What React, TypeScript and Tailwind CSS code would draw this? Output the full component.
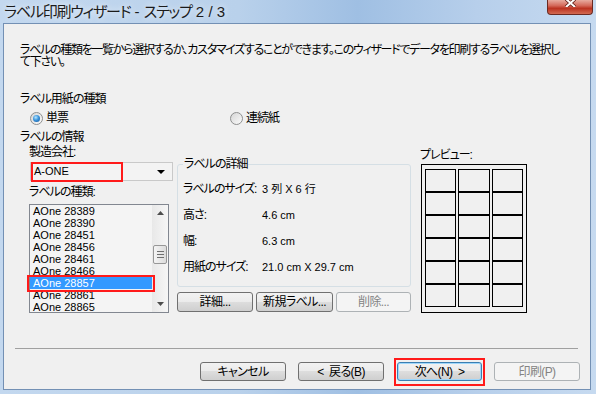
import type { ReactNode } from "react";

const font = "[font-family:'Liberation_Sans','Noto_Sans_CJK_JP',sans-serif] [font-feature-settings:'palt']";

const labelItems = [
  "AOne 28389",
  "AOne 28390",
  "AOne 28451",
  "AOne 28456",
  "AOne 28461",
  "AOne 28466",
  "AOne 28857",
  "AOne 28861",
  "AOne 28865",
];

type BtnProps = {
  children: ReactNode;
  className?: string;
  disabled?: boolean;
  focused?: boolean;
};

function Btn({ children, className = "", disabled = false, focused = false }: BtnProps) {
  const look = disabled
    ? "border-[#adb2b5] bg-[#f4f4f4] text-[#838383]"
    : focused
      ? "border-[#3c7fb1] shadow-[inset_0_0_0_1px_#9fd7fb] bg-[linear-gradient(#f2f2f2_0%,#ebebeb_50%,#dddddd_50%,#cfcfcf_100%)] text-black"
      : "border-[#707070] bg-[linear-gradient(#f2f2f2_0%,#ebebeb_50%,#dddddd_50%,#cfcfcf_100%)] text-black";
  return (
    <div className={`rounded-[3px] border flex items-center justify-center text-[12px] leading-none tracking-[-0.6px] whitespace-pre ${look} ${className}`}>
      {children}
    </div>
  );
}

function Radio({ checked }: { checked?: boolean }) {
  return (
    <span className="w-[13px] h-[13px] rounded-full border border-[#8e8f8f] bg-[linear-gradient(135deg,#d6d6d6,#fbfbfb)] flex items-center justify-center shrink-0">
      {checked && (
        <span className="w-[7px] h-[7px] rounded-full bg-[radial-gradient(circle_at_40%_35%,#b6e6ff_0%,#3c95dc_45%,#0d4f96_100%)]" />
      )}
    </span>
  );
}

function Triangle({ up }: { up?: boolean }) {
  return (
    <svg width="7" height="4" viewBox="0 0 7 4">
      {up ? <polygon points="0,4 7,4 3.5,0" fill="#4d4d4d" /> : <polygon points="0,0 7,0 3.5,4" fill="#4d4d4d" />}
    </svg>
  );
}

export default function App() {
  return (
    <div className={`w-[596px] h-[394px] flex flex-col overflow-hidden tracking-[-1px] bg-[linear-gradient(90deg,#c3d8ef_0%,#b9d1eb_40%,#9fbfe3_60%,#b7cfeb_80%,#c6daf0_100%)] ${font}`}>
      {/* title bar */}
      <div className="h-[23px] flex items-start justify-between shrink-0">
        <div className="pl-[4px] pt-[3px] text-[15px] leading-[18px] tracking-[-1.2px] text-[#1b1b1b] [text-shadow:0_0_6px_#ffffff] whitespace-pre">
          ラベル印刷ウィザード<span className="tracking-normal"> - </span>ステップ<span className="tracking-normal"> 2 / 3</span>
        </div>
        <div className="mr-[3px] w-[46px] h-[15px] rounded-b-[4px] border border-t-0 border-[#6b2a22] bg-[linear-gradient(#e7ab9f_0%,#d4695a_40%,#bb3321_60%,#d26a52_100%)] flex justify-center">
          <svg width="11" height="8" viewBox="0 0 11 8" className="mt-[-1px]">
            <path d="M1 0 L10 8 M10 0 L1 8" stroke="#5a1b14" strokeWidth="3.4" />
            <path d="M1 0 L10 8 M10 0 L1 8" stroke="#ffffff" strokeWidth="2" />
          </svg>
        </div>
      </div>

      {/* client area */}
      <div className="flex-1 ml-[3px] mr-[5px] mb-[4px] border border-[#7390b4] bg-[#f0f0f0] flex flex-col text-black text-[12px]">
        <div className="mt-[20px] pl-[16px] whitespace-nowrap tracking-[-1.3px]">
          <div className="h-[12px] leading-[12px]">
            ラベルの種類を一覧から選択するか、カスタマイズすることができます。このウィザードでデータを印刷するラベルを選択し
          </div>
          <div className="h-[12px] leading-[12px]">て下さい。</div>
        </div>

        <div className="mt-[24px] pl-[16px] h-[14px] leading-[14px]">ラベル用紙の種類</div>

        <div className="mt-[5px] pl-[26px] h-[14px] leading-[14px] flex items-center">
          <div className="w-[200px] flex items-center gap-[3px]">
            <Radio checked />
            <span>単票</span>
          </div>
          <div className="flex items-center gap-[3px]">
            <Radio />
            <span>連続紙</span>
          </div>
        </div>

        <div className="mt-[5px] pl-[16px] h-[14px] leading-[14px]">ラベルの情報</div>

        {/* main row */}
        <div className="flex pl-[25px] h-[169px]">
          {/* left column */}
          <div className="w-[144px] flex flex-col">
            <div className="mt-[1px] h-[14px] leading-[14px]">製造会社:</div>
            <div className="relative mt-[3px] ml-[1px] w-[143px] h-[19px] border border-[#c9c9c9] bg-[#f3f3f3] flex items-center pl-[3px]">
              <span className="text-[11px] leading-none tracking-normal">A-ONE</span>
              <span className="ml-auto mr-[7px] flex">
                <svg width="8" height="4" viewBox="0 0 8 4">
                  <polygon points="0,0 8,0 4,4" fill="#000" />
                </svg>
              </span>
              <div className="absolute left-0 top-[-1px] w-[92px] h-[20px] border-2 border-[#ff1a1a]" />
            </div>
            <div className="mt-[4px] h-[14px] leading-[14px]">ラベルの種類:</div>
            <div className="relative mt-[5px] w-[140px] h-[109px]">
              <div className="w-full h-full border border-[#828790] bg-[#f4f4f4] flex overflow-hidden">
                <div className="flex-1 flex flex-col">
                  {labelItems.map((item, i) => (
                    <div
                      key={item}
                      className={`h-[12px] shrink-0 leading-[12px] text-[11px] tracking-normal pl-[3px] ${i === 6 ? "bg-[#3399ff] text-white" : ""}`}
                    >
                      {item}
                    </div>
                  ))}
                </div>
                <div className="w-[16px] flex flex-col bg-[linear-gradient(90deg,#e8e8e8,#f6f6f6)]">
                  <div className="h-[16px] flex items-center justify-center">
                    <Triangle up />
                  </div>
                  <div className="h-[24px]" />
                  <div className="mx-[1px] h-[19px] rounded-[2px] border border-[#979797] bg-[linear-gradient(90deg,#f4f4f4,#dcdcdc)] flex flex-col items-center justify-center gap-[2px]">
                    <div className="w-[7px] h-[1px] bg-[#6f6f6f]" />
                    <div className="w-[7px] h-[1px] bg-[#6f6f6f]" />
                    <div className="w-[7px] h-[1px] bg-[#6f6f6f]" />
                  </div>
                  <div className="flex-1" />
                  <div className="h-[16px] flex items-center justify-center">
                    <Triangle />
                  </div>
                </div>
              </div>
              <div className="absolute left-[-2px] top-[71px] w-[128px] h-[17px] border-2 border-[#ff1a1a]" />
            </div>
          </div>

          {/* middle column */}
          <div className="ml-[4px] w-[234px] flex flex-col">
            <fieldset className="mt-[13px] border border-[#d5dfe5] rounded-[3px] px-[5px] pb-[6px]">
              <legend className="px-[1px] h-[14px] leading-[14px]">ラベルの詳細</legend>
              <div className="mt-[5px] flex flex-col">
                {[
                  ["ラベルのサイズ:", "3 列 X 6 行"],
                  ["高さ:", "4.6 cm"],
                  ["幅:", "6.3 cm"],
                  ["用紙のサイズ:", "21.0 cm X 29.7 cm"],
                ].map(([k, v]) => (
                  <div key={k} className="h-[26px] flex items-center whitespace-nowrap">
                    <span className="w-[79px] shrink-0">{k}</span>
                    <span className="text-[11px] tracking-normal">{v}</span>
                  </div>
                ))}
              </div>
            </fieldset>
            <div className="mt-[5px] flex gap-[3px]">
              <Btn className="w-[76px] h-[20px]">詳細...</Btn>
              <Btn className="w-[77px] h-[20px]">新規ラベル...</Btn>
              <Btn className="w-[75px] h-[20px]" disabled>
                削除...
              </Btn>
            </div>
          </div>

          {/* right column */}
          <div className="ml-[9px] w-[107px] flex flex-col">
            <div className="mt-[4px] h-[14px] leading-[14px]">プレビュー:</div>
            <div className="mt-[2px] ml-[1px] w-[106px] h-[150px] border border-black pl-[3px] pt-[4px]">
              <div className="grid grid-cols-[31px_32px_31px] gap-x-[2px]">
                {Array.from({ length: 18 }).map((_, i) => (
                  <div key={i} className="h-[23px] border border-black" />
                ))}
              </div>
            </div>
          </div>
        </div>

        {/* separator */}
        <div className="mt-[35px] ml-[11px] w-[563px] h-[1px] bg-[#a0a0a0]" />

        {/* bottom buttons */}
        <div className="mt-[13px] flex justify-end pr-[10px]">
          <Btn className="w-[86px] h-[19px]">キャンセル</Btn>
          <Btn className="ml-[12px] w-[86px] h-[19px]">{"<  戻る(B)"}</Btn>
          <div className="relative ml-[13px]">
            <Btn className="w-[85px] h-[19px]" focused>
              {"次へ(N)  >"}
            </Btn>
            <div className="absolute left-[-3px] top-[-4px] w-[91px] h-[28px] border-2 border-[#ff1a1a]" />
          </div>
          <Btn className="ml-[12px] w-[86px] h-[19px]" disabled>
            印刷(P)
          </Btn>
        </div>
      </div>
    </div>
  );
}
